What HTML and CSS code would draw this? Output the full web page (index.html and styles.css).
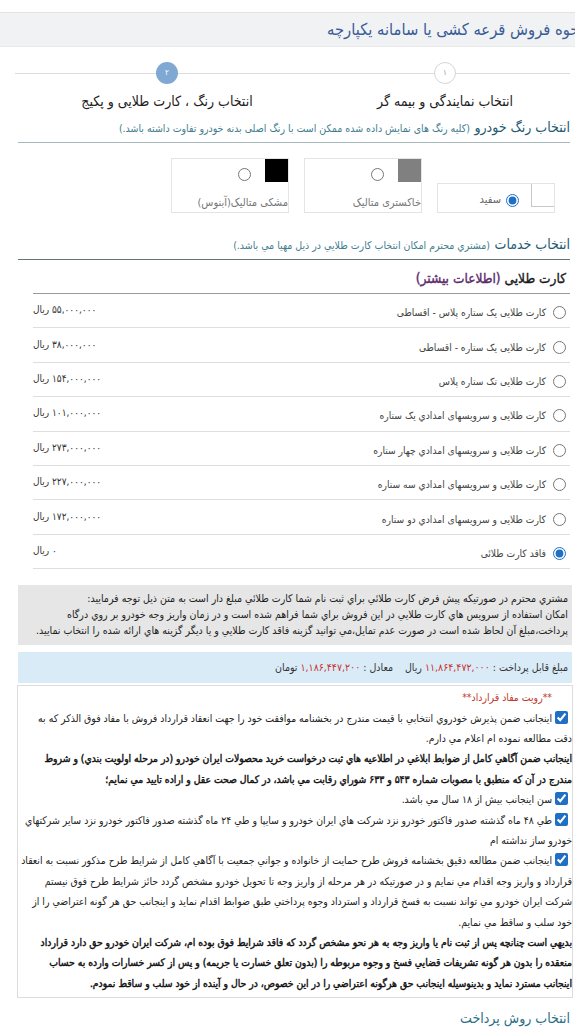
FILE: index.html
```html
<!DOCTYPE html>
<html lang="fa" dir="rtl">
<head>
<meta charset="utf-8">
<title>انتخاب رنگ و کارت طلایی</title>
<link rel="stylesheet" href="styles.css">
</head>
<body>
<div class="titlebar"><h1 class="page-title">نحوه فروش قرعه کشی یا سامانه یکپارچه</h1></div>

<div class="stepper">
  <div class="step"><span class="dot dot-done">۱</span><span class="step-label">انتخاب نمایندگی و بیمه گر</span></div>
  <div class="step"><span class="dot dot-active">۲</span><span class="step-label">انتخاب رنگ ، کارت طلایی و پکیج</span></div>
</div>

<div class="section-head"><span class="section-title">انتخاب رنگ خودرو</span> <span class="section-note">(کلیه رنگ های نمایش داده شده ممکن است با رنگ اصلی بدنه خودرو تفاوت داشته باشد.)</span></div>

<div class="swatches">
  <label class="swatch-card swatch-inline"><span class="chip chip-white"></span><input type="radio" name="color" checked><span class="swatch-name">سفید</span></label>
  <label class="swatch-card"><span class="swatch-top"><span class="chip chip-gray"></span><input type="radio" name="color"></span><span class="swatch-name">خاکستری متالیک</span></label>
  <label class="swatch-card"><span class="swatch-top"><span class="chip chip-black"></span><input type="radio" name="color"></span><span class="swatch-name">مشکی متالیک(آبنوس)</span></label>
</div>

<div class="section-head services-head"><span class="section-title">انتخاب خدمات</span> <span class="section-note">(مشتري محترم امكان انتخاب كارت طلايي در ذيل مهيا مي باشد.)</span></div>

<div class="gold-head">کارت طلایی <span class="gold-more">(اطلاعات بیشتر)</span></div>
<ul class="gold-list">
  <li class="gold-row"><label class="gold-option"><input type="radio" name="gold">کارت طلایی یک ستاره پلاس - اقساطی</label><span class="gold-price">۵۵,۰۰۰,۰۰۰ ریال</span></li>
  <li class="gold-row"><label class="gold-option"><input type="radio" name="gold">کارت طلایی یک ستاره - اقساطی</label><span class="gold-price">۳۸,۰۰۰,۰۰۰ ریال</span></li>
  <li class="gold-row"><label class="gold-option"><input type="radio" name="gold">کارت طلایی تک ستاره پلاس</label><span class="gold-price">۱۵۴,۰۰۰,۰۰۰ ریال</span></li>
  <li class="gold-row"><label class="gold-option"><input type="radio" name="gold">کارت طلایی و سرویسهای امدادي يک ستاره</label><span class="gold-price">۱۰۱,۰۰۰,۰۰۰ ریال</span></li>
  <li class="gold-row"><label class="gold-option"><input type="radio" name="gold">کارت طلایی و سرویسهای امدادي چهار ستاره</label><span class="gold-price">۲۷۳,۰۰۰,۰۰۰ ریال</span></li>
  <li class="gold-row"><label class="gold-option"><input type="radio" name="gold">کارت طلایی و سرویسهای امدادي سه ستاره</label><span class="gold-price">۲۲۷,۰۰۰,۰۰۰ ریال</span></li>
  <li class="gold-row"><label class="gold-option"><input type="radio" name="gold">کارت طلایی و سرویسهای امدادي دو ستاره</label><span class="gold-price">۱۷۲,۰۰۰,۰۰۰ ریال</span></li>
  <li class="gold-row"><label class="gold-option"><input type="radio" name="gold" checked>فاقد کارت طلائی</label><span class="gold-price">۰ ریال</span></li>
</ul>

<div class="notice">مشتري محترم در صورتيكه پيش فرض كارت طلائي براي ثبت نام شما كارت طلائي مبلغ دار است به متن ذيل توجه فرماييد:<br>امكان استفاده از سرويس هاي كارت طلايي در اين فروش براي شما فراهم شده است و در زمان واريز وجه خودرو بر روي درگاه پرداخت،مبلغ آن لحاظ شده است در صورت عدم تمايل،مي توانيد گزينه فاقد كارت طلايي و يا ديگر گزينه هاي ارائه شده را انتخاب نماييد.</div>

<div class="payment">مبلغ قابل پرداخت : <span class="amount">۱۱,۸۶۴,۴۷۲,۰۰۰</span> ریال &nbsp;&nbsp; معادل : <span class="amount">۱,۱۸۶,۴۴۷,۲۰۰</span> تومان</div>

<div class="contract">
  <p class="contract-title">**رویت مفاد قرارداد**</p>
  <p class="clause"><input type="checkbox" checked>اینجانب ضمن پذیرش خودروي انتخابي با قيمت مندرج در بخشنامه موافقت خود را جهت انعقاد قرارداد فروش با مفاد فوق الذكر كه به دقت مطالعه نموده ام اعلام مي دارم.</p>
  <p class="clause clause-bold">اینجانب ضمن آگاهي كامل از ضوابط ابلاغي در اطلاعيه هاي ثبت درخواست خريد محصولات ايران خودرو (در مرحله اولويت بندي) و شروط<br>مندرج در آن كه منطبق با مصوبات شماره ۵۴۳ و ۶۳۳ شوراي رقابت مي باشد، در كمال صحت عقل و اراده تاييد مي نمايم؛</p>
  <p class="clause"><input type="checkbox" checked>سن اينجانب بيش از ۱۸ سال مي باشد.</p>
  <p class="clause"><input type="checkbox" checked>طي ۴۸ ماه گذشته صدور فاكتور خودرو نزد شركت هاي ايران خودرو و سايپا و طي ۲۴ ماه گذشته صدور فاكتور خودرو نزد ساير شركتهاي خودرو ساز نداشته ام</p>
  <p class="clause"><input type="checkbox" checked>اينجانب ضمن مطالعه دقيق بخشنامه فروش طرح حمايت از خانواده و جواني جمعيت با آگاهي كامل از شرايط طرح مذكور نسبت به انعقاد قرارداد و واريز وجه اقدام مي نمايم و در صورتيكه در هر مرحله از واريز وجه تا تحويل خودرو مشخص گردد حائز شرايط طرح فوق نيستم شركت ايران خودرو مي تواند نسبت به فسخ قرارداد و استرداد وجوه پرداختي طبق ضوابط اقدام نمايد و اينجانب حق هر گونه اعتراضي را از خود سلب و ساقط مي نمايم.</p>
  <p class="clause clause-bold">بديهي است چنانچه پس از ثبت نام يا واريز وجه به هر نحو مشخص گردد كه فاقد شرايط فوق بوده ام، شركت ايران خودرو حق دارد قرارداد منعقده را بدون هر گونه تشريفات قضايي فسخ و وجوه مربوطه را (بدون تعلق خسارت يا جريمه) و پس از كسر خسارات وارده به حساب اينجانب مسترد نمايد و بدينوسيله اينجانب حق هرگونه اعتراضي را در اين خصوص، در حال و آينده از خود سلب و ساقط نمودم.</p>
</div>

<div class="section-head payment-head"><span class="section-title">انتخاب روش پرداخت</span></div>
</body>
</html>
```

FILE: styles.css
```css
* { box-sizing: border-box; }
html, body { margin: 0; padding: 0; }
body {
  width: 575px;
  overflow-x: hidden;
  direction: rtl;
  font-family: "DejaVu Sans Condensed", "DejaVu Sans", sans-serif;
  font-stretch: condensed;
  color: #333;
  background: #fff;
  accent-color: #1f6fc4;
}

.titlebar {
  margin-top: 12px;
  height: 35px;
  background: #f1f2f4;
  border-top: 1px solid #e1e2e4;
  border-bottom: 1px solid #e8e9eb;
  overflow: hidden;
}
.page-title {
  margin: 0 -9px 0 0;
  font-size: 16.4px;
  font-weight: normal;
  line-height: 33px;
  color: #3a5c98;
  white-space: nowrap;
}

.stepper {
  position: relative;
  display: flex;
  gap: 78px;
  padding-right: 30px;
  margin-top: 15px;
}
.stepper::before {
  content: "";
  position: absolute;
  top: 11px;
  left: 15px;
  right: 5px;
  border-top: 1px solid #dcdcdc;
}
.step {
  position: relative;
  width: 200px;
  display: flex;
  flex-direction: column;
  align-items: center;
}
.dot {
  width: 22px;
  height: 22px;
  border-radius: 50%;
  display: flex;
  align-items: center;
  justify-content: center;
  font-size: 8px;
  line-height: 1;
}
.dot-done { background: #fff; border: 1px solid #d6d6d6; color: #999; }
.dot-active { background: #7fa8d3; color: #fff; }
.step-label {
  margin-top: 7px;
  font-size: 14px;
  line-height: 20px;
  color: #222;
  white-space: nowrap;
}

.section-head {
  margin: 6px 5px 0 18px;
  padding-bottom: 4px;
  border-bottom: 1px solid #a7b9bc;
  line-height: 20px;
  white-space: nowrap;
}
.section-title { font-size: 14px; color: #245a72; }
.section-note { font-size: 10.5px; color: #3f7d8e; }
.services-head { margin-top: 21px; border-bottom-color: #5f7876; }
.payment-head { margin-top: 10px; border-bottom-color: #a7b9bc; }
.payment-head .section-title { color: #2a6f86; }

.swatches {
  display: flex;
  align-items: flex-end;
  gap: 15px;
  padding-right: 20px;
  margin-top: 15px;
}
.swatch-card {
  width: 118px;
  height: 55px;
  border: 1px solid #e4e4e4;
  background: #fff;
  display: flex;
  flex-direction: column;
  align-items: flex-start;
}
.swatch-top { display: flex; align-items: flex-start; }
.chip { width: 23px; height: 23px; flex: none; }
.chip-gray { background: #808080; }
.chip-black { background: #000; }
.chip-white { border-left: 1px solid #c8c8c8; border-bottom: 1px solid #c8c8c8; }
.swatch-card input { width: 13px; height: 13px; margin: 9px 14px 0 0; }
.swatch-name {
  margin-top: 12px;
  font-size: 11px;
  line-height: 18px;
  color: #777;
  white-space: nowrap;
}
.swatch-inline { flex-direction: row; height: 30px; }
.swatch-inline input { margin: 10px 12px 0 0; }
.swatch-inline .swatch-name { margin: 7px 5px 0 0; color: #666; }

.gold-head {
  margin: 7px 5px 0 33px;
  padding: 0 4px 4px 0;
  border-bottom: 1px solid #9a9a9a;
  font-size: 13.6px;
  line-height: 22px;
  color: #1a1a1a;
  -webkit-text-stroke: 0.35px currentColor;
}
.gold-more { color: #5b2a6c; }
.gold-list { margin: 0 5px 0 33px; padding: 0; list-style: none; }
.gold-row {
  display: flex;
  align-items: center;
  justify-content: space-between;
  height: 34.4px;
  border-bottom: 1px solid #dedede;
}
.gold-option {
  display: flex;
  align-items: center;
  font-size: 10.2px;
  color: #444;
  padding-top: 4px;
}
.gold-option input { width: 13px; height: 13px; margin: 0 4px 0 7px; }
.gold-price { font-size: 10px; color: #333; padding-bottom: 2px; }

.notice {
  margin: 16px 3px 0 18px;
  padding: 5px 4px 7px 10px;
  background: #e6e6e6;
  font-size: 10.5px;
  line-height: 16px;
  color: #222;
}
.payment {
  margin: 7px 3px 0 18px;
  height: 31px;
  padding: 0 4px;
  background: #d9ebf7;
  font-size: 10.5px;
  line-height: 31px;
  color: #333;
}
.amount { color: #c9302c; }

.contract {
  margin: 2px 2px 0 17px;
  padding: 1px 0 4px 0;
  border: 1px solid #dcdcdc;
  font-size: 10.4px;
  line-height: 20.4px;
  color: #222;
}
.contract p { margin: 0; }
.contract-title { margin-right: 20px !important; color: #c0392b; }
.clause input { width: 13px; height: 13px; margin: 0 4px 0 3px; vertical-align: -2px; }
.clause-bold { font-size: 10.3px; color: #111; -webkit-text-stroke: 0.4px currentColor; }
```
